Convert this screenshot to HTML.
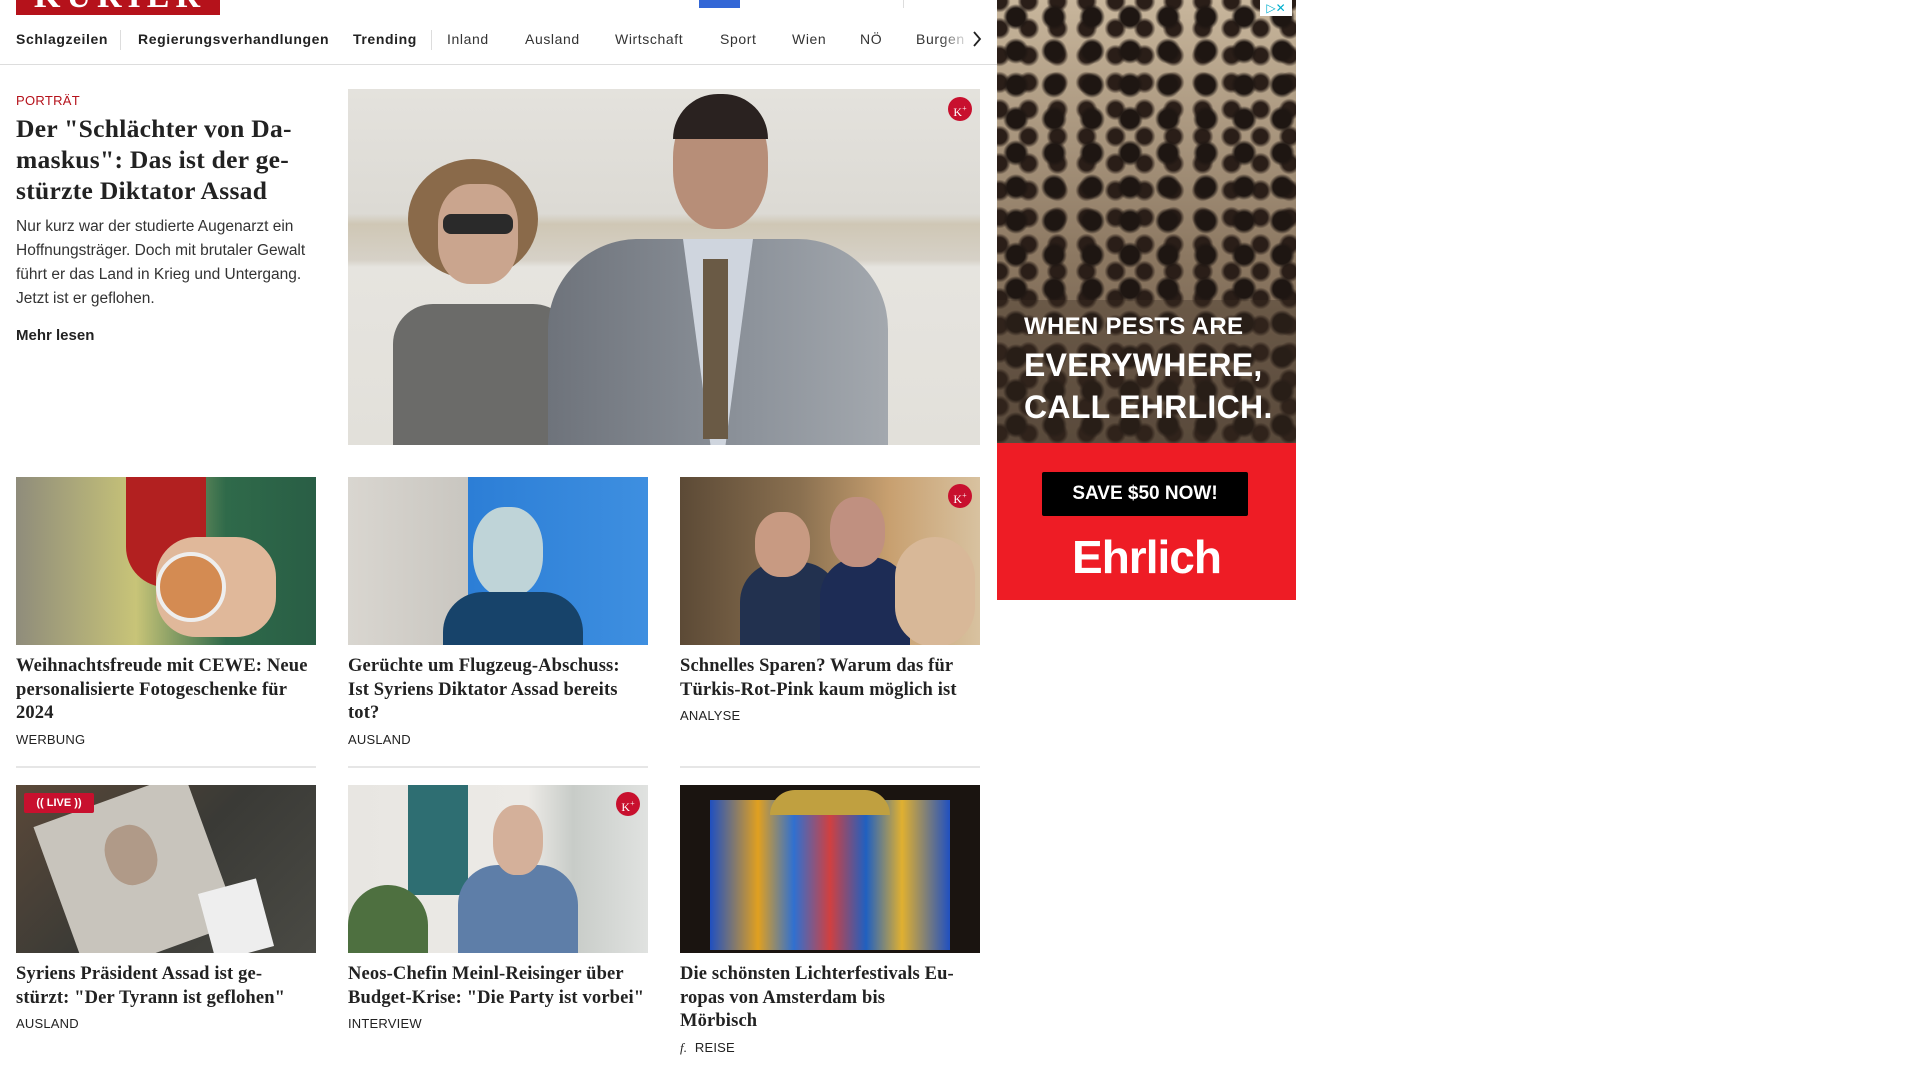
<!DOCTYPE html>
<html><head><meta charset="utf-8"><style>
*{margin:0;padding:0;box-sizing:border-box}
body{width:1920px;height:1080px;overflow:hidden;background:#fff;font-family:"Liberation Sans",sans-serif;color:#222;position:relative}
.abs{position:absolute}
.logo{left:16px;top:0;width:204px;height:15px;background:#b5121b;overflow:hidden}
.logo span{position:absolute;left:18px;top:-22px;font:bold 34px "Liberation Serif",serif;color:#fff;letter-spacing:6px}
.nav{left:0;top:0;width:1000px;height:65px;border-bottom:1px solid #ddd}
.nav span{position:absolute;top:31px;font-size:14px;letter-spacing:.6px;color:#333}
.nav .b{font-weight:bold;color:#222}
.vd{position:absolute;top:30px;width:1px;height:20px;background:#ddd}
.serif{font-family:"Liberation Serif",serif;font-weight:bold;color:#222}
.kp{position:absolute;width:24px;height:24px;border-radius:50%;background:#c8102e;color:#fff;font:12px "Liberation Serif",serif;text-align:center;line-height:24px}
.card{position:absolute;width:300px}
.card .img{width:300px;height:168px;position:relative;overflow:hidden}
.card h3{font:bold 18.5px/23.5px "Liberation Serif",serif;margin-top:10px;color:#222;letter-spacing:.15px;white-space:nowrap}
.card .tag{font-size:13px;margin-top:6px;color:#222;letter-spacing:.2px}
.sep{position:absolute;height:2px;background:#e6e6e6;width:300px}
</style></head><body>
<div class="abs logo"><span>KURIER</span></div>
<div class="abs" style="left:699px;top:0;width:41px;height:8px;background:#3367d6"></div>
<div class="abs" style="left:903px;top:0;width:1px;height:8px;background:#ddd"></div>
<div class="abs nav">
<span class="b" style="left:16px">Schlagzeilen</span><div class="vd" style="left:120px"></div>
<span class="b" style="left:138px">Regierungsverhandlungen</span>
<span class="b" style="left:353px">Trending</span><div class="vd" style="left:431px"></div>
<span style="left:447px">Inland</span><span style="left:525px">Ausland</span><span style="left:615px">Wirtschaft</span><span style="left:720px">Sport</span><span style="left:792px">Wien</span><span style="left:860px">NÖ</span><span style="left:916px">Burgen</span>
<div class="abs" style="left:940px;top:28px;width:30px;height:24px;background:linear-gradient(90deg,rgba(255,255,255,0),#fff)"></div>
<svg class="abs" style="left:972px;top:31px" width="10" height="16"><path d="M2 1l6 7-6 7" stroke="#222" stroke-width="1.8" fill="none"/></svg>
</div>

<div class="abs" style="left:16px;top:93px;font-size:13px;color:#b5121b;letter-spacing:.3px">PORTRÄT</div>
<div class="abs serif" style="left:16px;top:113px;width:320px;font-size:25.5px;line-height:31px;letter-spacing:.3px;white-space:nowrap">Der "Schlächter von Da-<br>maskus": Das ist der ge-<br>stürzte Diktator Assad</div>
<div class="abs" style="left:16px;top:215px;width:310px;font-size:15.5px;line-height:24px;color:#333">Nur kurz war der studierte Augenarzt ein<br>Hoffnungsträger. Doch mit brutaler Gewalt<br>führt er das Land in Krieg und Untergang.<br>Jetzt ist er geflohen.</div>
<div class="abs" style="left:16px;top:327px;font-size:15px;font-weight:bold;color:#222">Mehr lesen</div>

<div class="abs" style="left:348px;top:89px;width:632px;height:356px;overflow:hidden;background:linear-gradient(180deg,#e4e2dd 0,#dcdad4 35%,#cfc7b5 38%,#d6d1c7 48%,#e6e4df 50%,#e2e0da 100%)">
 <div class="abs" style="left:60px;top:70px;width:130px;height:120px;border-radius:50%;background:#8a6a4a"></div>
 <div class="abs" style="left:90px;top:95px;width:80px;height:100px;border-radius:40%;background:#caa58e"></div>
 <div class="abs" style="left:95px;top:125px;width:70px;height:20px;border-radius:8px;background:#2a2a2a"></div>
 <div class="abs" style="left:45px;top:215px;width:180px;height:150px;border-radius:40px 40px 0 0;background:#6b6b69"></div>
 <div class="abs" style="left:325px;top:10px;width:95px;height:130px;border-radius:45%;background:#b78e78"></div>
 <div class="abs" style="left:325px;top:5px;width:95px;height:45px;border-radius:45px 45px 0 0;background:#2a2220"></div>
 <div class="abs" style="left:200px;top:150px;width:340px;height:220px;border-radius:90px 90px 0 0;background:linear-gradient(90deg,#6e737b,#8d939b 60%,#a3a8ae)"></div>
 <div class="abs" style="left:335px;top:150px;width:70px;height:210px;background:#cfd5de;clip-path:polygon(0 0,100% 0,60% 100%,40% 100%)"></div>
 <div class="abs" style="left:355px;top:170px;width:25px;height:180px;background:#6a5a45"></div>
 <div class="kp" style="left:600px;top:8px">K<sup style="font-size:8px">+</sup></div>
</div>

<div class="card" style="left:16px;top:477px"><div class="img" style="background:linear-gradient(90deg,#8f8c7b,#c8c478 40%,#2f6a4a 70%,#295e45)">
 <div class="abs" style="left:110px;top:0;width:80px;height:110px;background:#b22020;border-radius:0 0 40px 40px"></div>
 <div class="abs" style="left:140px;top:60px;width:120px;height:100px;background:#e0b89a;border-radius:40px"></div>
 <div class="abs" style="left:140px;top:75px;width:70px;height:70px;border-radius:50%;background:#d48b52;border:4px solid #eee"></div></div>
 <h3>Weihnachtsfreude mit CEWE: Neue<br>personalisierte Fotogeschenke für<br>2024</h3><div class="tag">WERBUNG</div></div>
<div class="card" style="left:348px;top:477px"><div class="img" style="background:linear-gradient(90deg,#d9d6d0 0,#c9c6c0 40%,#2c7ed6 40%,#3e8fe0 100%)">
 <div class="abs" style="left:125px;top:30px;width:70px;height:90px;border-radius:45%;background:#bfd4d8"></div>
 <div class="abs" style="left:95px;top:115px;width:140px;height:60px;border-radius:40px 40px 0 0;background:#17436a"></div></div>
 <h3>Gerüchte um Flugzeug-Abschuss:<br>Ist Syriens Diktator Assad bereits<br>tot?</h3><div class="tag">AUSLAND</div></div>
<div class="card" style="left:680px;top:477px"><div class="img" style="background:linear-gradient(90deg,#5c4a36,#8a7050 40%,#c8a070 70%,#d8c2a0)">
 <div class="abs" style="left:60px;top:85px;width:100px;height:90px;border-radius:40px 40px 0 0;background:#22314f"></div>
 <div class="abs" style="left:75px;top:35px;width:55px;height:65px;border-radius:45%;background:#c89a82"></div>
 <div class="abs" style="left:140px;top:80px;width:90px;height:95px;border-radius:40px 40px 0 0;background:#1d2c55"></div>
 <div class="abs" style="left:150px;top:20px;width:55px;height:70px;border-radius:45%;background:#c09080"></div>
 <div class="abs" style="left:215px;top:60px;width:80px;height:110px;border-radius:40px;background:#d8b898"></div>
 <div class="kp" style="left:268px;top:7px">K<sup style="font-size:8px">+</sup></div></div>
 <h3>Schnelles Sparen? Warum das für<br>Türkis-Rot-Pink kaum möglich ist</h3><div class="tag">ANALYSE</div></div>
<div class="sep" style="left:16px;top:766px"></div><div class="sep" style="left:348px;top:766px"></div><div class="sep" style="left:680px;top:766px"></div>

<div class="card" style="left:16px;top:785px"><div class="img" style="background:linear-gradient(135deg,#5a4838,#3a3a36 50%,#4a4a44)">
 <div class="abs" style="left:40px;top:10px;width:160px;height:160px;background:#c8c4bc;transform:rotate(-20deg)"></div>
 <div class="abs" style="left:90px;top:40px;width:50px;height:60px;border-radius:45%;background:#b09a88;transform:rotate(-20deg)"></div>
 <div class="abs" style="left:190px;top:100px;width:60px;height:70px;background:#eee;transform:rotate(-15deg)"></div>
 <div class="abs" style="left:8px;top:8px;width:70px;height:20px;background:#c8102e;border-radius:2px;color:#fff;font-size:11px;font-weight:bold;line-height:20px;text-align:center">(( LIVE ))</div></div>
 <h3>Syriens Präsident Assad ist ge-<br>stürzt: "Der Tyrann ist geflohen"</h3><div class="tag">AUSLAND</div></div>
<div class="card" style="left:348px;top:785px"><div class="img" style="background:linear-gradient(90deg,#e8e6e2,#eceae6 60%,#c8ccc8 75%,#e0e2e0)">
 <div class="abs" style="left:60px;top:0;width:60px;height:110px;background:#2e6e72"></div>
 <div class="abs" style="left:0;top:100px;width:80px;height:70px;background:#4e7040;border-radius:40px 40px 0 0"></div>
 <div class="abs" style="left:110px;top:80px;width:120px;height:100px;border-radius:40px 40px 0 0;background:#5e7ea8"></div>
 <div class="abs" style="left:145px;top:20px;width:50px;height:70px;border-radius:45%;background:#d4b09a"></div>
 <div class="kp" style="left:268px;top:7px">K<sup style="font-size:8px">+</sup></div></div>
 <h3>Neos-Chefin Meinl-Reisinger über<br>Budget-Krise: "Die Party ist vorbei"</h3><div class="tag">INTERVIEW</div></div>
<div class="card" style="left:680px;top:785px"><div class="img" style="background:#1a1410">
 <div class="abs" style="left:30px;top:15px;width:240px;height:150px;background:linear-gradient(90deg,#2050c0,#e0a020 20%,#3070d0 35%,#d04040 50%,#2060c0 65%,#e0b030 80%,#2050c0)"></div>
 <div class="abs" style="left:90px;top:5px;width:120px;height:25px;background:#c0a040;border-radius:40px 40px 0 0"></div></div>
 <h3>Die schönsten Lichterfestivals Eu-<br>ropas von Amsterdam bis<br>Mörbisch</h3><div class="tag"><i style="font-family:'Liberation Serif',serif">f.</i>&nbsp; REISE</div></div>

<div class="abs" style="left:997px;top:0;width:299px;height:600px;overflow:hidden;background:#b8a48c">
 <div class="abs" style="left:0;top:0;width:299px;height:443px;background:radial-gradient(circle,#1e1612 0 9px,rgba(30,22,18,0) 13px) 0 0/38px 34px,radial-gradient(circle,#2a1e18 0 7px,rgba(40,30,24,0) 11px) 17px 15px/29px 27px,linear-gradient(180deg,#c8b69c,#8a7660 60%,#6a5a4a)"></div>
 <div class="abs" style="left:0;top:300px;width:299px;height:143px;background:rgba(60,45,35,.35)"></div>
 <div class="abs" style="left:27px;top:308px;color:#fff;font-weight:bold;font-size:24px;line-height:38px;letter-spacing:.3px;white-space:nowrap">WHEN PESTS ARE<br><span style="font-size:32px">EVERYWHERE,</span><br><span style="font-size:32px">CALL EHRLICH.</span></div>
 <div class="abs" style="left:0;top:443px;width:299px;height:157px;background:#ee1c25"></div>
 <div class="abs" style="left:45px;top:472px;width:206px;height:44px;background:#000;border-radius:2px;color:#fff;font-weight:bold;font-size:19px;text-align:center;line-height:44px">SAVE $50 NOW!</div>
 <div class="abs" style="left:0;top:530px;width:299px;text-align:center;color:#fff;font-weight:bold;font-size:46px;letter-spacing:-1px">Ehrlich</div>
 <div class="abs" style="left:263px;top:0;width:32px;height:16px;background:#fff;color:#00aecd;font-size:12px;line-height:16px;text-align:center">▷✕</div>
</div>
</body></html>
